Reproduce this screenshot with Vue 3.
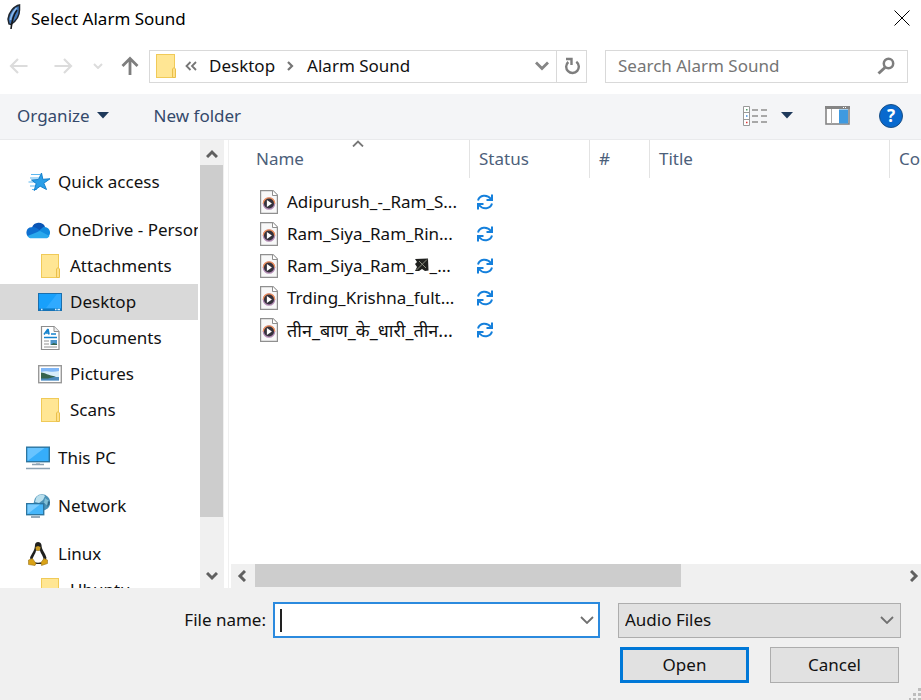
<script setup>
import { ref } from 'vue'

const tree = [
  { label: 'Quick access', icon: 'star', group: true },
  { label: 'OneDrive - Personal', icon: 'cloud', group: true },
  { label: 'Attachments', icon: 'folder' },
  { label: 'Desktop', icon: 'desktop', selected: true },
  { label: 'Documents', icon: 'documents' },
  { label: 'Pictures', icon: 'pictures' },
  { label: 'Scans', icon: 'folder' },
  { label: 'This PC', icon: 'pc', group: true },
  { label: 'Network', icon: 'network', group: true },
  { label: 'Linux', icon: 'linux', group: true },
  { label: 'Ubuntu', icon: 'folder' },
]

const files = [
  { name: 'Adipurush_-_Ram_S...' },
  { name: 'Ram_Siya_Ram_Rin...' },
  { name: 'Ram_Siya_Ram_', bow: true, rest: '_...' },
  { name: 'Trding_Krishna_fult...' },
  { name: 'तीन_बाण_के_धारी_तीन...', lang: 'hi' },
]

const fileName = ref('')
const query = ref('')
</script>

<template>
  <div class="dialog">
    <header class="titlebar">
      <svg class="feather" width="16" height="26" viewBox="0 0 16 26" aria-hidden="true">
        <path d="M13.500 1C8 2 3 8 2 15l1 5 2 .5C10 17 13.500 12 13.500 6z" fill="#3f76b8" stroke="#20262e" stroke-width="1.500" />
        <path d="M11 6C8 10 6 15 5 25" fill="none" stroke="#15181c" stroke-width="1.600" />
        <path d="M10.500 4C7 8 5 11 4.500 16" fill="none" stroke="#8fbcec" stroke-width="1.500" />
      </svg>
      <h1>Select Alarm Sound</h1>
      <button class="plain close" aria-label="Close">
        <svg width="16" height="16" viewBox="0 0 16 16"><path d="M.5.5l15 15M15.500.5l-15 15" stroke="#000" stroke-width="1" /></svg>
      </button>
    </header>

    <nav class="navbar">
      <div class="arrows">
        <button class="plain" aria-label="Back">
          <svg width="20" height="18" viewBox="0 0 20 18" fill="none" stroke="#dcdcdc" stroke-width="2.200"><path d="M18.500 9H2M9 2L2 9l7 7" /></svg>
        </button>
        <button class="plain" aria-label="Forward">
          <svg width="20" height="18" viewBox="0 0 20 18" fill="none" stroke="#dcdcdc" stroke-width="2.200"><path d="M1.500 9H18M11 2l7 7-7 7" /></svg>
        </button>
        <button class="plain" aria-label="Recent locations">
          <svg width="10" height="6" viewBox="0 0 10 6" fill="none" stroke="#dcdcdc" stroke-width="2"><path d="M1 1l4 4 4-4" /></svg>
        </button>
        <button class="plain" aria-label="Up">
          <svg width="18" height="20" viewBox="0 0 18 20" fill="none" stroke="#7e7e7e" stroke-width="2.800"><path d="M9 19V3M1.500 10L9 2.500l7.500 7.500" /></svg>
        </button>
      </div>
      <div class="address">
        <svg width="21" height="26" viewBox="0 0 21 26" aria-hidden="true">
          <rect x=".5" y="1.500" width="18" height="23" fill="#ffe694" stroke="#f0ca58" />
          <path d="M16.500 24.500V16l1.500-1.500 1.500 1.500v8.500z" fill="#ffe08a" stroke="#e9c04b" />
        </svg>
        <svg class="laquo" width="12" height="10" viewBox="0 0 12 10" fill="none" stroke="#757575" stroke-width="1.800"><path d="M5.500 1l-4 4 4 4M11 1L7 5l4 4" /></svg>
        <button class="plain crumb">Desktop</button>
        <svg class="sep" width="7" height="10" viewBox="0 0 7 10" fill="none" stroke="#757575" stroke-width="2.200"><path d="M1 1l4 4-4 4" /></svg>
        <button class="plain crumb">Alarm Sound</button>
        <button class="plain history" aria-label="Previous locations">
          <svg width="14" height="10" viewBox="0 0 14 10" fill="none" stroke="#858585" stroke-width="2.800"><path d="M1 1.500l6 6 6-6" /></svg>
        </button>
        <button class="plain refresh" aria-label="Refresh">
          <svg width="16" height="18" viewBox="0 0 16 18" fill="none" stroke="#7e7e7e" stroke-width="2.400"><path d="M12.300 4.700a6.300 6.300 0 1 1-8 .3" /><path d="M2 2h5.500v6" /></svg>
        </button>
      </div>
      <div class="search">
        <input v-model="query" type="search" placeholder="Search Alarm Sound" aria-label="Search Alarm Sound" />
        <svg width="18" height="18" viewBox="0 0 18 18" fill="none" stroke="#7e7e7e"><circle cx="11.500" cy="6.500" r="4.700" stroke-width="2.500" /><path d="M8 10.500l-6.500 6" stroke-width="3" /></svg>
      </div>
    </nav>

    <div class="toolbar">
      <button class="plain">Organize
        <svg width="12" height="7" viewBox="0 0 12 7"><path d="M0 0h12L6 6.500z" fill="#1e395b" /></svg>
      </button>
      <button class="plain">New folder</button>
      <button class="plain view" aria-label="Change your view">
        <svg width="25" height="20" viewBox="0 0 25 20" fill="none">
          <g stroke="#999" stroke-width="1" fill="#fff"><path d="M.5.5h6v19h-6zM.5 6.500h6M.5 13.500h6" /></g>
          <g stroke="#8e8e8e" stroke-width="1.300"><path d="M9 4h6M18 4h6M9 10h6M18 10h6M9 16h6M18 16h6" /></g>
          <path d="M3 3h1.500v1.500H3z" fill="#4e9a68" /><path d="M3 9.300h1.500v1.500H3z" fill="#3b87dd" /><path d="M3 15.800h1.500v1.500H3z" fill="#d33" />
        </svg>
        <svg width="12" height="7" viewBox="0 0 12 7"><path d="M0 0h12L6 6.500z" fill="#1e395b" /></svg>
      </button>
      <button class="plain pane" aria-label="Show the preview pane">
        <svg width="25" height="19" viewBox="0 0 25 19">
          <rect x="1" y="1" width="23" height="17" fill="#fff" stroke="#858585" stroke-width="1.600" />
          <path d="M0 0h25v3H0z" fill="#858585" /><path d="M6.500 3v15" stroke="#aaa" /><path d="M14 3.500h9v14h-9z" fill="#3f9ae0" /><path d="M18 1.500h4" stroke="#fff" stroke-dasharray="1" />
        </svg>
      </button>
      <button class="plain help" aria-label="Help">?</button>
    </div>

    <main class="body">
      <div class="tree">
        <a v-for="(item, i) in tree" :key="i" href="#" class="node" :class="{ group: item.group, selected: item.selected }">
          <svg v-if="item.icon === 'star'" width="24" height="24" viewBox="0 0 24 24">
            <path d="M5 4.500h9M4 8h9M2.500 12h8M4 16h6M6 19.500h5" stroke="#5cb8f0" stroke-width="1.200" />
            <path d="M15.500 3l1.300 6.300 7.200-.5-6.200 4.400 2.700 6.300-6.300-3.300-6 4.300 2-7-4.700-3.500 7-.5z" fill="#2b9fe8" stroke="#1681cd" />
          </svg>
          <svg v-else-if="item.icon === 'cloud'" width="24" height="24" viewBox="0 0 24 24">
            <path d="M6 9.500a7.200 7.200 0 0 1 13-1l-6 6z" fill="#0a55b5" />
            <path d="M4 19.500a5.300 5.300 0 0 1 1.500-10.300c2.500-.5 5 .3 8 3L11 19z" fill="#0e6fd0" />
            <path d="M12 13.500L17 9.300c4-1.500 7.500 2 7 6-.3 2.500-2 4.500-4.500 4.500H5.500z" fill="#118bdf" />
            <path d="M1.500 18L14 13l9.500 5c-1 1.700-2 2.300-4 2.300H5.500c-2 0-3-.8-4-2.300z" fill="#2aa9ed" />
          </svg>
          <svg v-else-if="item.icon === 'folder'" width="24" height="26" viewBox="0 0 24 26">
            <rect x="3.500" y="1.500" width="17" height="23" fill="#ffe694" stroke="#f0ca58" />
            <path d="M18.500 24.500V16l1.500-1.500 1.500 1.500v8.500z" fill="#ffe08a" stroke="#e9c04b" />
          </svg>
          <svg v-else-if="item.icon === 'desktop'" width="24" height="24" viewBox="0 0 24 24">
            <rect x=".5" y="3.500" width="23" height="17" fill="#18a0fb" stroke="#1a6fae" />
            <path d="M8 18L19 4h4v14z" fill="#30aaff" /><path d="M1 18.500h22v2H1z" fill="#1279c0" />
            <path d="M3 19.500h1.500M17 19.500h1.500M19.500 19.500H22" stroke="#d9efff" stroke-width="1.300" />
          </svg>
          <svg v-else-if="item.icon === 'documents'" width="24" height="26" viewBox="0 0 24 26">
            <path d="M3.500 1.500H16l5 5v18H3.500z" fill="#fff" stroke="#8d8d8d" stroke-width="1.200" /><path d="M16 1.500v5h5" fill="#eee" stroke="#8d8d8d" />
            <path d="M6 9.500L10 4M10 4l1 5.500M8 8h3M13 9h5M6 12.500h13" stroke="#1683cd" stroke-width="1.600" />
            <path d="M6 16h5M6 19h5M6 22h13" stroke="#929292" /><path d="M12.500 15H19v5h-6.500z" fill="#4b94ca" /><path d="M12.500 20l3-2 3.500 1v1z" fill="#33654d" />
          </svg>
          <svg v-else-if="item.icon === 'pictures'" width="24" height="24" viewBox="0 0 24 24">
            <rect x=".7" y="3.700" width="22.600" height="17" fill="#fff" stroke="#999" stroke-width="1.400" />
            <path d="M3 6h18v12.500H3z" fill="#7fb6f7" /><path d="M3 10c5-2 10 1 18-1v9.500H3z" fill="#d7ecfa" />
            <path d="M3 15h18v3.500H3z" fill="#4a88bb" /><path d="M3 10.500c4 0 7 3 15 4l-8 2H3z" fill="#35634e" />
          </svg>
          <svg v-else-if="item.icon === 'pc'" width="24" height="24" viewBox="0 0 24 24">
            <rect x=".7" y="1.200" width="22.600" height="14.500" fill="#36aefb" stroke="#2d759f" stroke-width="1.400" />
            <path d="M1.500 15V2h17z" fill="#68c4ff" />
            <path d="M10 16.500h4v1.500h-4z" fill="#b7c5ce" /><path d="M6 18.500h12M0 22.500h24" stroke="#8ba1b2" stroke-width="1.700" />
          </svg>
          <svg v-else-if="item.icon === 'network'" width="24" height="24" viewBox="0 0 24 24">
            <circle cx="16" cy="8.500" r="8.200" fill="#4b91b6" /><path d="M10 4c2-4 7-4 9-2l-2 4-4 3-4-1z" fill="#b9dfed" /><path d="M19 4l4 3-1 5-4-3z" fill="#81bfd6" /><path d="M21 13a8.200 8.200 0 0 0 3-5l-2-1z" fill="#2d6584" />
            <rect x=".7" y="9.700" width="17" height="11" fill="#46b6fa" stroke="#2d759f" stroke-width="1.400" /><path d="M1.500 20v-9.500H14z" fill="#7bcdff" />
            <path d="M5 23h9" stroke="#7c95a8" stroke-width="1.600" />
          </svg>
          <svg v-else width="24" height="24" viewBox="0 0 24 24">
            <path d="M9 3c0-4 6-4 6.500 0 0 5 4 8 5 13l-3 6H7l-3-6c1-4 5-7 5-13z" fill="#20201e" />
            <path d="M10 8.500h4c1 4 4 6 3.500 10-1 3-10 3-11 0 0-4 3-6 3.500-10z" fill="#fff" />
            <path d="M9.500 5l2.500-1 2.500 1-.5 3-2 1-2-1z" fill="#c99a22" />
            <path d="M2.500 18l4-1.500 3.500 5-1 2-6.500-1zM21.500 18l-3.500-1.500-3 4 .5 3 6-2z" fill="#d9a216" stroke="#9a741b" stroke-width=".6" />
          </svg>
          <span>{{ item.label }}</span>
        </a>
      </div>
      <div class="vscroll" aria-hidden="true">
        <svg width="12" height="9" viewBox="0 0 12 9" fill="none" stroke="#606060" stroke-width="3"><path d="M1 8l5-5 5 5" /></svg>
        <div class="vtrack"><div class="vthumb"></div></div>
        <svg width="12" height="9" viewBox="0 0 12 9" fill="none" stroke="#606060" stroke-width="3"><path d="M1 1l5 5 5-5" /></svg>
      </div>
      <section class="listing">
        <div class="tablewrap">
          <table>
            <colgroup><col class="c-name" /><col class="c-status" /><col class="c-num" /><col class="c-title" /><col class="c-rest" /></colgroup>
            <thead>
              <tr>
                <th class="sorted">Name
                  <svg width="12" height="7" viewBox="0 0 12 7" fill="none" stroke="#777" stroke-width="1.800"><path d="M1 6.500l5-5 5 5" /></svg>
                </th>
                <th>Status</th><th>#</th><th>Title</th><th>Contributing artists</th>
              </tr>
            </thead>
            <tbody>
              <tr v-for="file in files" :key="file.name">
                <td>
                  <div class="file">
                    <svg width="18" height="24" viewBox="0 0 18 24">
                      <path d="M.6.6h12.400l4.400 4.400v18.400H.6z" fill="#f8f8f8" stroke="#8f8f8f" stroke-width="1.200" /><path d="M12.500 .6v4.900h4.900" fill="#fff" stroke="#8f8f8f" />
                      <circle cx="9" cy="13.500" r="6.300" fill="#b28bb4" /><path d="M2.700 13.500a6.300 6.300 0 0 1 12.600 0z" fill="#f2935c" />
                      <circle cx="9" cy="13.500" r="5" fill="#35323c" /><path d="M6.900 10v7l5-3.500z" fill="#fff" />
                    </svg>
                    <span :lang="file.lang">{{ file.name }}<svg v-if="file.bow" class="bow" width="16" height="14" viewBox="0 0 16 14"><path d="M1 1l13-.5.5 12L11 13 8 11 5 13 1 13l2-4-2-3 2-2z" fill="#20211f" /><path d="M2.500 12L13 1.500M5 3l7 7" stroke="#8b8d80" stroke-width="1" /></svg>{{ file.rest }}</span>
                  </div>
                </td>
                <td>
                  <svg class="sync" width="16" height="16" viewBox="0 0 16 16" fill="none" stroke="#1580dc" stroke-width="2">
                    <path d="M1 6.500C2.500 1 10 0 14 5M15 .5V6H9.500M15 9.500c-1.500 5.500-9 6.500-13 1.500M1 15.500V10h5.500" />
                  </svg>
                </td>
                <td></td><td></td><td></td>
              </tr>
            </tbody>
          </table>
        </div>
        <div class="hscroll" aria-hidden="true">
          <svg width="9" height="12" viewBox="0 0 9 12" fill="none" stroke="#606060" stroke-width="3"><path d="M8 1L3 6l5 5" /></svg>
          <div class="htrack"><div class="hthumb"></div></div>
          <svg width="9" height="12" viewBox="0 0 9 12" fill="none" stroke="#606060" stroke-width="3"><path d="M1 1l5 5-5 5" /></svg>
        </div>
      </section>
    </main>

    <footer class="footer">
      <div class="row">
        <label for="file-name">File name:</label>
        <div class="combo">
          <i class="caret"></i>
          <input id="file-name" v-model="fileName" type="text" />
          <svg width="14" height="8" viewBox="0 0 14 8" fill="none" stroke="#707070" stroke-width="1.800"><path d="M1 1l6 6 6-6" /></svg>
        </div>
        <div class="filter">
          <select aria-label="File type"><option>Audio Files</option></select>
          <svg width="14" height="8" viewBox="0 0 14 8" fill="none" stroke="#707070" stroke-width="1.800"><path d="M1 1l6 6 6-6" /></svg>
        </div>
      </div>
      <div class="row actions">
        <button class="btn primary">Open</button>
        <button class="btn">Cancel</button>
      </div>
      <svg class="grip" width="12" height="12" viewBox="0 0 12 12" fill="#bdbdbd"><path d="M9 0h3v3H9zM4 5h3v3H4zM9 5h3v3H9zM0 10h2v2H0zM4 10h3v2H4zM9 10h3v2H9z" /></svg>
    </footer>
  </div>
</template>

<style>
body { background: #fff; }
</style>

<style scoped>
.dialog {
  display: flex; flex-direction: column; height: 100vh; overflow: hidden;
  font-family: "Noto Sans", "Open Sans", sans-serif; font-size: 17px; line-height: 24px; color: #111;
}
.dialog * { box-sizing: border-box; }
svg { display: block; flex: none; }
input, select, button { font: inherit; color: inherit; }
.plain { display: flex; align-items: center; border: 0; background: none; padding: 0; }

.titlebar { display: flex; align-items: center; height: 38px; padding: 0 11px 0 6px; color: #000; }
.titlebar h1 { margin: 0 auto 0 9px; font-size: 17px; font-weight: 400; }
.feather { margin-bottom: 4px; }
.close { margin-bottom: 2px; }

.navbar { display: flex; align-items: center; height: 56px; padding: 0 13px 0 9px; }
.arrows { display: flex; align-items: center; width: 140px; gap: 24px; }
.arrows button:nth-child(3) { margin-left: -4px; }
.arrows button:nth-child(4) { margin-left: -6px; }
.address { display: flex; flex: 1; align-items: center; height: 33px; border: 1px solid #d9d9d9; padding-left: 6px; }
.laquo { margin: 0 12px 0 8px; }
.sep { margin: 0 13px 0 12px; }
.history { margin: 0 7px 0 auto; }
.refresh { justify-content: center; width: 30px; height: 31px; border-left: 1px solid #d9d9d9; }
.search { display: flex; align-items: center; width: 303px; height: 33px; margin-left: 18px; padding: 0 12px; border: 1px solid #d9d9d9; }
.search input { flex: 1; min-width: 0; border: 0; padding: 0; outline: 0; background: none; appearance: none; }
.search input::placeholder { color: #757575; opacity: 1; }

.toolbar { display: flex; align-items: center; height: 46px; padding: 0 18px 2px 17px; background: #f4f5f7; border-bottom: 1px solid #e9eaec; color: #34496b; }
.toolbar button:first-child { gap: 7px; margin-right: 45px; }
.toolbar .view { gap: 13px; margin-left: auto; }
.toolbar .pane { margin: 0 29px 0 32px; }
.toolbar .help { justify-content: center; width: 24px; height: 24px; border: 1px solid #1a4f85; border-radius: 50%; background: #0869ce; color: #fff; font-weight: 700; }

.body { display: flex; flex: 1; min-height: 0; }
.tree { width: 200px; padding: 24px 2px 0 0; overflow: hidden; }
.node { display: flex; align-items: center; height: 36px; gap: 8px; padding-left: 38px; overflow: hidden; color: #111; text-decoration: none; white-space: nowrap; }
.node.group { padding-left: 26px; }
.node.group + .node.group, .node:not(.group) + .node.group { margin-top: 12px; }
.node.selected { background: #d9d9d9; }
.vscroll { display: flex; flex-direction: column; align-items: center; width: 24px; padding: 9px 1px 7px 0; background: #f0f0f0; }
.vtrack { flex: 1; align-self: stretch; padding: 7px 0; }
.vthumb { height: 88%; background: #cdcdcd; }
.listing { display: flex; flex: 1; flex-direction: column; min-width: 0; margin-left: 4px; border-left: 1px solid #f0f0f0; }
.tablewrap { flex: 1; min-height: 0; overflow: hidden; }
table { width: 921px; table-layout: fixed; border-collapse: separate; border-spacing: 0; }
.c-name { width: 241px; }
.c-status { width: 120px; }
.c-num { width: 60px; }
.c-title { width: 240px; }
th { height: 38px; padding: 0 9px; border-right: 1px solid #e3e3e3; color: #4c607a; font-weight: 400; text-align: left; white-space: nowrap; }
th.sorted { position: relative; padding-left: 27px; }
th.sorted svg { position: absolute; top: 0; left: 123px; }
tbody::before { content: ""; display: block; height: 8px; }
td { height: 32px; padding: 0; }
td:first-child { padding-left: 31px; }
.file { display: flex; align-items: center; gap: 9px; white-space: nowrap; }
.file [lang="hi"] { font-size: 18px; }
.bow { display: inline-block; }
.sync { margin-left: 7px; }
.hscroll { display: flex; align-items: center; height: 24px; margin-left: 2px; padding: 0 2px 0 6px; background: #f0f0f0; }
.htrack { flex: 1; align-self: stretch; padding: 0 9px 1px 9px; }
.hthumb { width: 66%; height: 100%; background: #cdcdcd; }

.footer { position: relative; height: 112px; padding: 14px 20px 0 0; background: #f0f0f0; }
.row { display: flex; align-items: center; }
.row label { width: 266px; margin-right: 7px; text-align: right; }
.combo { display: flex; flex: 1; align-items: center; height: 36px; margin-right: 18px; padding: 0 4px 0 5px; border: 2px solid #2b8ade; background: #fff; }
.combo input { flex: 1; min-width: 0; border: 0; padding: 0; outline: 0; background: none; }
.caret { width: 2px; height: 23px; background: #222; }
.filter { display: grid; align-items: center; width: 283px; height: 35px; border: 1px solid #adadad; background: #e1e1e1; }
.filter > * { grid-area: 1 / 1; }
.filter select { height: 33px; border: 0; padding: 0 0 0 6px; background: none; appearance: none; }
.filter svg { justify-self: end; margin-right: 6px; pointer-events: none; }
.actions { justify-content: flex-end; gap: 21px; margin-top: 9px; padding-right: 2px; }
.btn { width: 129px; height: 36px; border: 1px solid #adadad; padding: 0; background: #e1e1e1; }
.btn.primary { border: 3px solid #0078d7; }
.grip { position: absolute; right: 0; bottom: 0; }
</style>
